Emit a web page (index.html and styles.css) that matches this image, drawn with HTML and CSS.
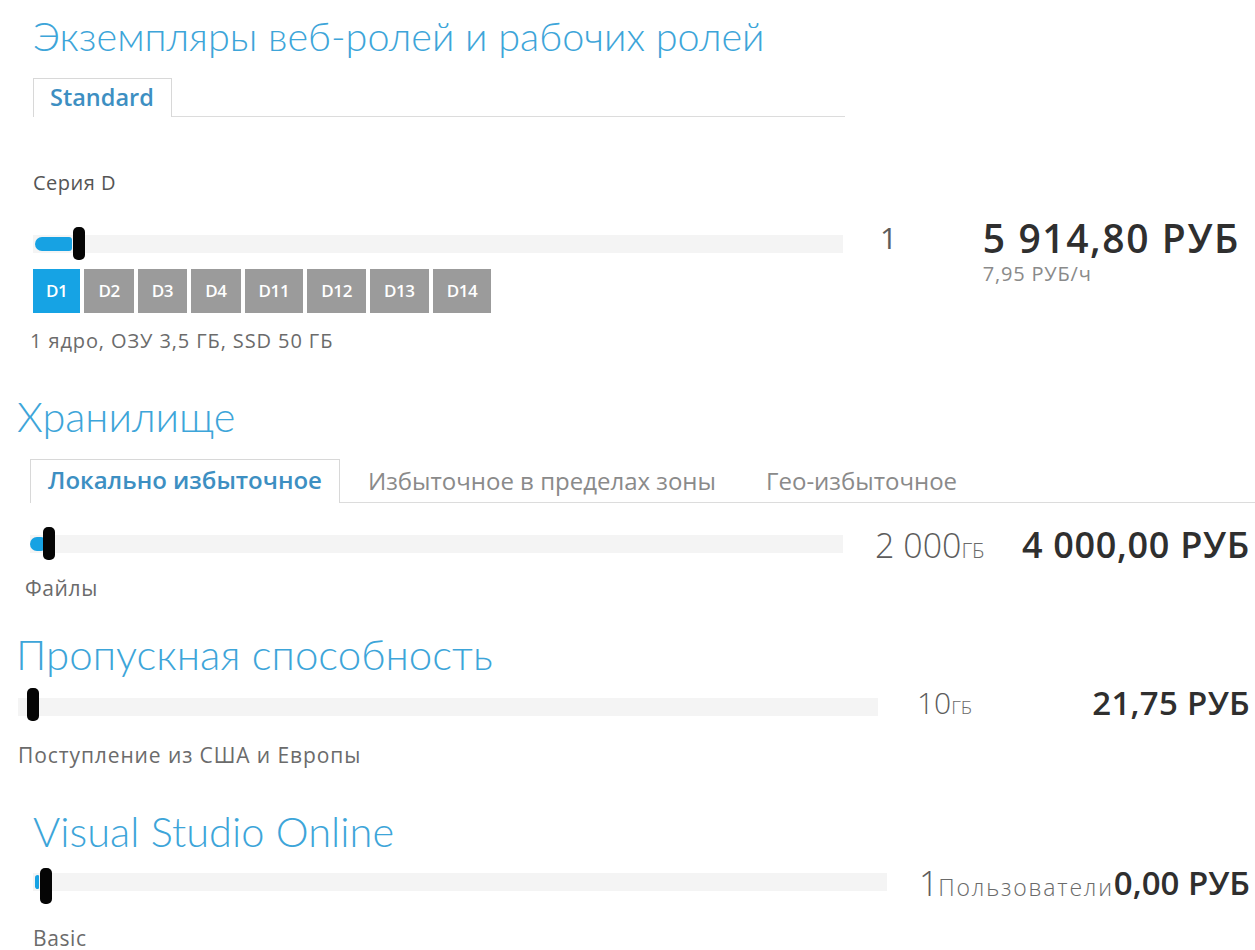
FILE: index.html
```html
<!DOCTYPE html>
<html lang="ru">
<head>
<meta charset="utf-8">
<title>Калькулятор цен</title>
<link rel="stylesheet" href="styles.css">
</head>
<body>
<main class="calculator">

  <section class="calc calc--roles">
    <h2 class="calc-title">Экземпляры веб-ролей и рабочих ролей</h2>
    <div class="tabs tabs--roles">
      <span class="tab tab--active">Standard</span>
    </div>
    <div class="series-label">Серия D</div>
    <div class="calc-row">
      <div class="slider-col">
        <div class="slider">
          <span class="slider-fill" style="width:37px"></span>
          <span class="slider-thumb" style="left:40px"></span>
        </div>
        <div class="sizes">
          <span class="size size--active">D1</span>
          <span class="size">D2</span>
          <span class="size">D3</span>
          <span class="size">D4</span>
          <span class="size">D11</span>
          <span class="size">D12</span>
          <span class="size">D13</span>
          <span class="size">D14</span>
        </div>
        <div class="hint">1 ядро, ОЗУ 3,5 ГБ, SSD 50 ГБ</div>
      </div>
      <div class="qty">1</div>
      <div class="price-col">
        <div class="price">5 914,80 РУБ</div>
        <div class="rate">7,95 РУБ/ч</div>
      </div>
    </div>
  </section>

  <section class="calc calc--storage">
    <h2 class="calc-title">Хранилище</h2>
    <div class="tabs tabs--storage">
      <span class="tab tab--active">Локально избыточное</span>
      <span class="tab">Избыточное в пределах зоны</span>
      <span class="tab">Гео-избыточное</span>
    </div>
    <div class="calc-row">
      <div class="slider-col">
        <div class="slider">
          <span class="slider-fill" style="width:14px"></span>
          <span class="slider-thumb" style="left:13px"></span>
        </div>
        <div class="hint">Файлы</div>
      </div>
      <div class="qty">2 000<span class="unit">ГБ</span></div>
      <div class="price">4 000,00 РУБ</div>
    </div>
  </section>

  <section class="calc calc--bandwidth">
    <h2 class="calc-title">Пропускная способность</h2>
    <div class="calc-row">
      <div class="slider-col">
        <div class="slider">
          <span class="slider-thumb" style="left:9px"></span>
        </div>
        <div class="hint">Поступление из США и Европы</div>
      </div>
      <div class="qty">10<span class="unit">ГБ</span></div>
      <div class="price">21,75 РУБ</div>
    </div>
  </section>

  <section class="calc calc--vso">
    <h2 class="calc-title">Visual Studio Online</h2>
    <div class="calc-row">
      <div class="slider-col">
        <div class="slider">
          <span class="slider-fill" style="width:4px"></span>
          <span class="slider-thumb" style="left:7px"></span>
        </div>
        <div class="hint">Basic</div>
      </div>
      <div class="qty qty--users">1<span class="unit">Пользователи</span></div>
      <div class="price price--tight">0,00 РУБ</div>
    </div>
  </section>

</main>
</body>
</html>
```

FILE: styles.css
```css
html, body {
  margin: 0;
  padding: 0;
  background: #ffffff;
}

body {
  font-family: "Open Sans", "Noto Sans", "Liberation Sans", sans-serif;
  color: #505050;
  width: 1255px;
  height: 950px;
  overflow: hidden;
}

.calculator {
  display: flex;
  flex-direction: column;
}

/* ---------- section shells ---------- */

.calc {
  display: flex;
  flex-direction: column;
  padding-right: 5px;
}

.calc-title {
  margin: 0;
  font-family: "Lato", "Open Sans", sans-serif;
  font-weight: 300;
  font-size: 42px;
  line-height: 48px;
  color: #3da5d9;
  white-space: nowrap;
}

.calc--roles {
  padding-left: 33px;
  padding-top: 12px;
}

.calc--roles .calc-title {
  font-size: 39.6px;
}

.calc--storage {
  padding-left: 30px;
  padding-top: 37px;
}

.calc--storage .calc-title {
  margin-left: -13px;
  font-size: 41.5px;
}

.calc--bandwidth {
  padding-left: 18px;
  padding-top: 28px;
}

.calc--bandwidth .calc-title {
  margin-left: -2px;
}

.calc--vso {
  padding-left: 33px;
  padding-top: 38px;
}

.calc--vso .calc-title {
  font-size: 41.6px;
}

/* ---------- tabs ---------- */

.tabs {
  display: flex;
  align-items: flex-end;
  border-bottom: 1px solid #dcdcdc;
}

.tabs--roles {
  margin-top: 18px;
  width: 812px;
}

.tabs--storage {
  margin-top: 19px;
  margin-right: -5px;
}

.tab {
  display: block;
  padding: 0 25px;
  height: 41px;
  line-height: 40px;
  font-size: 24px;
  color: #8a8a8a;
  white-space: nowrap;
}

.tab--active {
  color: #3d8fc2;
  font-weight: 600;
  border: 1px solid #d8d8d8;
  border-bottom: none;
  background: #ffffff;
  margin-bottom: -1px;
}

.tabs--roles .tab--active {
  height: 38px;
  line-height: 36px;
  padding: 0 17px 0 16px;
  font-size: 23.5px;
}

.tabs--storage .tab--active {
  height: 43px;
  line-height: 40px;
  padding: 0 17px;
  margin-right: 3px;
}

.series-label {
  margin-top: 51px;
  font-size: 20px;
  line-height: 30px;
  color: #555555;
  letter-spacing: 0.5px;
}

/* ---------- rows ---------- */

.calc-row {
  display: flex;
  align-items: flex-start;
}

.slider-col {
  display: flex;
  flex-direction: column;
}

.calc--roles .slider-col { width: 810px; padding-top: 37px; }
.calc--storage .slider-col { width: 813px; padding-top: 32px; }
.calc--bandwidth .slider-col { width: 860px; padding-top: 20px; }
.calc--vso .slider-col { width: 854px; padding-top: 18px; }

.slider {
  position: relative;
  height: 18px;
  background: #f4f4f4;
}

.slider-fill {
  position: absolute;
  left: 2px;
  top: 2px;
  height: 14px;
  background: #17a2e3;
  border-radius: 7px 3px 3px 7px;
}

.calc--storage .slider-fill {
  left: 0;
}

.slider-thumb {
  position: absolute;
  top: -8px;
  width: 12px;
  height: 33px;
  background: #050505;
  border-radius: 5px;
}

.calc--bandwidth .slider-thumb {
  top: -10px;
}

.calc--vso .slider-thumb {
  top: -5px;
  height: 36px;
}

/* ---------- size buttons ---------- */

.sizes {
  display: flex;
  gap: 4px;
  margin-top: 16px;
}

.size {
  display: block;
  height: 44px;
  line-height: 44px;
  padding: 0 14px;
  background: #9b9b9b;
  color: #ffffff;
  font-size: 17px;
  font-weight: 600;
  letter-spacing: -0.4px;
}

.size--active {
  background: #16a3e4;
  padding: 0 13px;
}

.hint {
  font-size: 20px;
  line-height: 28px;
  color: #6b6b6b;
  letter-spacing: 0.6px;
}

.calc--roles .hint { margin-top: 14px; margin-left: -3px; letter-spacing: 0.9px; }
.calc--storage .hint { margin-top: 21px; margin-left: -5px; font-size: 21px; }
.calc--bandwidth .hint { margin-top: 25px; font-size: 21px; letter-spacing: 0.9px; }
.calc--vso .hint { margin-top: 38px; font-size: 21px; line-height: 18px; }

/* ---------- values ---------- */

.qty {
  font-size: 30px;
  line-height: 40px;
  color: #5c5c5c;
  white-space: nowrap;
}

.unit {
  font-size: 19px;
  color: #6a6a6a;
}

.price {
  margin-left: auto;
  font-size: 36px;
  font-weight: 600;
  line-height: 40px;
  color: #2f2f2f;
  white-space: nowrap;
}

.price-col {
  margin-left: auto;
  margin-right: 10px;
}

.price-col .price {
  margin-left: 0;
  font-size: 39px;
  line-height: 36px;
  letter-spacing: 1.6px;
}

.rate {
  margin-top: 8px;
  font-size: 20px;
  line-height: 20px;
  color: #8a8a8a;
  letter-spacing: 0.8px;
}

.calc--roles .qty { margin-left: 37px; padding-top: 20px; }
.calc--roles .price-col { padding-top: 22px; }

.calc--storage .qty { margin-left: 32px; padding-top: 22px; font-weight: 300; font-size: 34px; }
.calc--storage .unit { font-size: 21px; }
.calc--storage .price { padding-top: 22px; font-size: 36px; letter-spacing: 0.7px; }

.calc--bandwidth .qty { margin-left: 39px; padding-top: 5px; font-weight: 300; }
.calc--bandwidth .price { padding-top: 5px; font-size: 33px; letter-spacing: 0.3px; }

.calc--vso .qty { margin-left: auto; padding-top: 8px; font-weight: 300; font-size: 34px; }
.calc--vso .unit { font-size: 23px; letter-spacing: 1.8px; }
.calc--vso .price--tight { margin-left: 0; padding-top: 8px; font-size: 33px; }
```
